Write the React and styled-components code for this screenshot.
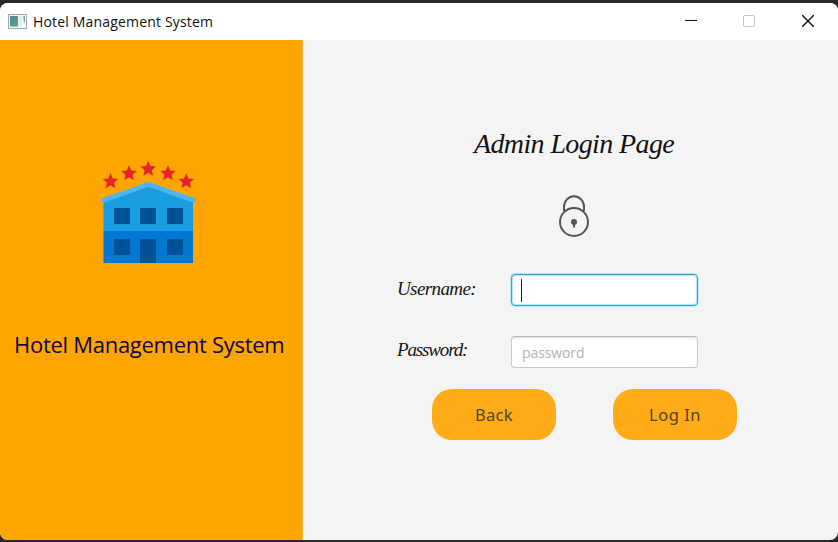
import React from "react";
import styled, { createGlobalStyle } from "styled-components";

const GlobalStyle = createGlobalStyle`
  * { box-sizing: border-box; }
  body { margin: 0; background: #28282a; overflow: hidden; }
`;

const Desktop = styled.div`
  height: 542px;
  padding: 3px 0 2px;
  background: #28282a;
`;

const Window = styled.div`
  display: flex;
  flex-direction: column;
  width: 838px;
  height: 537px;
  border-radius: 8px;
  overflow: hidden;
  background: #f4f4f4;
`;

const TitleBar = styled.header`
  display: flex;
  align-items: center;
  flex: none;
  height: 37px;
  padding-left: 8px;
  background: #fff;
`;

const WindowTitle = styled.span`
  flex: 1;
  margin-left: 6px;
  padding-top: 1px;
  font: 14px/20px "Open Sans", sans-serif;
  letter-spacing: ${(p) => p.$spacing};
  color: #111;
  white-space: nowrap;
`;

const WindowControl = styled.button`
  display: flex;
  align-items: center;
  justify-content: center;
  width: ${(p) => p.$width}px;
  height: 37px;
  padding: ${(p) => p.$lift || 0}px 0 ${(p) => (p.$lift ? 0 : 1)}px;
  border: 0;
  background: transparent;
`;

const Content = styled.div`
  display: flex;
  flex: 1;
`;

const BrandPanel = styled.aside`
  display: flex;
  flex-direction: column;
  width: 303px;
  padding-top: 118px;
  background: #ffa500;
  border-right: 1px solid #f5b240;
`;

const HotelLogo = styled.svg`
  display: block;
  flex: none;
  margin-left: 98px;
`;

const BrandName = styled.h1`
  margin: 60px 0 0 14px;
  font: 400 22px/32px "Open Sans", sans-serif;
  letter-spacing: ${(p) => p.$spacing};
  color: #0b0748;
  white-space: nowrap;
`;

const LoginPanel = styled.main`
  flex: 1;
  padding-top: 84px;
`;

const Heading = styled.h2`
  margin: 0 0 0 171px;
  font: italic 400 28px/40px "Liberation Serif", serif;
  letter-spacing: ${(p) => p.$spacing};
  color: #111;
  white-space: nowrap;
`;

const LockIcon = styled.svg`
  display: block;
  margin: 29px 0 0 255px;
`;

const FieldRow = styled.label`
  display: flex;
  align-items: flex-start;
  height: 32px;
  margin: ${(p) => p.$top}px 0 0 94px;
`;

const FieldName = styled.span`
  width: 114px;
  font: italic 400 19px/${(p) => p.$line}px "Liberation Serif", serif;
  letter-spacing: ${(p) => p.$spacing};
  color: #151515;
`;

const FieldBox = styled.span`
  display: flex;
  align-items: center;
  width: 187px;
  height: 32px;
  padding: 0 ${(p) => (p.$focused ? 9 : 10)}px;
  border: ${(p) => (p.$focused ? "1.5px solid #349fc8" : "1px solid #c8c8c8")};
  border-top-color: ${(p) => (p.$focused ? "#349fc8" : "#b8b8b8")};
  border-radius: 4px;
  background: #fff;
  box-shadow: ${(p) =>
    p.$focused
      ? "0 0 1px 1px #b5e8f8, inset 0 0 1px 1px #aee6f8"
      : "inset 0 2px 2px -1px #ddd"};
`;

const Caret = styled.span`
  width: 1px;
  height: 23px;
  background: #222;
`;

const Placeholder = styled.span`
  padding-top: 2px;
  font: 14px/20px "Open Sans", sans-serif;
  letter-spacing: ${(p) => p.$spacing};
  color: #b4b4b4;
`;

const Actions = styled.div`
  display: flex;
  gap: 57px;
  margin: 21px 0 0 128.5px;
`;

const ActionButton = styled.button`
  width: 124px;
  height: 51px;
  padding: 0 0 0 1px;
  border: 0;
  border-radius: 20px;
  background: #ffac18;
  font: 16.5px/24px "Noto Sans", sans-serif;
  letter-spacing: ${(p) => p.$spacing};
  color: #51441f;
`;

const STARS = [
  [12.5, 23.5],
  [31, 15.5],
  [50.2, 11],
  [70, 15.5],
  [88.3, 23.5],
];

function starPoints(cx, cy, radius) {
  return Array.from({ length: 10 }, (_, i) => {
    const r = i % 2 ? radius * 0.46 : radius;
    const a = -Math.PI / 2 + (i * Math.PI) / 5;
    return `${(cx + r * Math.cos(a)).toFixed(2)},${(cy + r * Math.sin(a)).toFixed(2)}`;
  }).join(" ");
}

function Hotel() {
  return (
    <HotelLogo width="102" height="110" viewBox="0 0 102 110">
      <path d="M5.5 41 50.5 26 95 41V74H5.5Z" fill="#1b9de3" />
      <path d="M5.5 73H95v32H5.5Z" fill="#0078d4" />
      <path d="m5.5 42.3 45-16L95.5 42.3" fill="none" stroke="#50b4ef" strokeWidth="4.8" strokeLinecap="round" strokeLinejoin="round" />
      <g fill="#005296">
        <path d="M16 50h16v16H16zM42 50h16v16H42zM69 50h16v16H69zM16 81h16v16H16zM69 81h16v16H69zM42 81h16v24H42z" />
      </g>
      <g fill="#e5252b">
        {STARS.map(([x, y]) => (
          <polygon key={x} points={starPoints(x, y, 8.2)} />
        ))}
      </g>
    </HotelLogo>
  );
}

function Lock() {
  return (
    <LockIcon width="32" height="44" viewBox="0 0 32 44" fill="none" stroke="#555" strokeWidth="2">
      <path d="M6 18v-4.2a10 10.5 0 0 1 20 0V18" />
      <circle cx="16" cy="29" r="14" />
      <circle cx="16" cy="29" r="3" fill="#555" stroke="none" />
      <path d="M16 30v4.5" />
    </LockIcon>
  );
}

function AppIcon() {
  return (
    <svg width="19" height="16" viewBox="0 0 19 16">
      <defs>
        <linearGradient id="screen" x1="0" y1="0" x2="0.5" y2="1">
          <stop offset="0" stopColor="#577eae" />
          <stop offset="1" stopColor="#55a477" />
        </linearGradient>
      </defs>
      <rect x=".5" y=".5" width="18" height="14" fill="#f5f6f8" stroke="#a2a9b0" />
      <rect x="2" y="2" width="8" height="10.5" fill="url(#screen)" />
      <path d="M11 2h3v10.5h-3z" fill="#e4e7ed" />
      <path d="M15.5 2h1.5v7l-1.5-3z" fill="#65a594" />
    </svg>
  );
}

export default function App() {
  return (
    <Desktop>
      <GlobalStyle />
      <Window>
        <TitleBar>
          <AppIcon />
          <WindowTitle $spacing="0.17px">Hotel Management System</WindowTitle>
          <WindowControl $width={58} aria-label="Minimize">
            <svg width="12" height="12"><path d="M0 5.5h12" stroke="#111" /></svg>
          </WindowControl>
          <WindowControl $width={58} aria-label="Maximize">
            <svg width="12" height="12"><rect x=".5" y=".5" width="11" height="11" rx="1" fill="none" stroke="#c4c4c4" /></svg>
          </WindowControl>
          <WindowControl $width={60} aria-label="Close">
            <svg width="12" height="12"><path d="m0 0 12 12M12 0 0 12" stroke="#111" strokeWidth="1.4" /></svg>
          </WindowControl>
        </TitleBar>
        <Content>
          <BrandPanel>
            <Hotel />
            <BrandName $spacing="-0.28px">Hotel Management System</BrandName>
          </BrandPanel>
          <LoginPanel>
            <Heading $spacing="-0.62px">Admin Login Page</Heading>
            <Lock />
            <FieldRow $top={37}>
              <FieldName $line={30} $spacing="-0.6px">Username:</FieldName>
              <FieldBox $focused><Caret /></FieldBox>
            </FieldRow>
            <FieldRow $top={30}>
              <FieldName $line={28} $spacing="-1.15px">Password:</FieldName>
              <FieldBox><Placeholder $spacing="-0.1px">password</Placeholder></FieldBox>
            </FieldRow>
            <Actions>
              <ActionButton $spacing="0.3px">Back</ActionButton>
              <ActionButton $spacing="0.5px">Log In</ActionButton>
            </Actions>
          </LoginPanel>
        </Content>
      </Window>
    </Desktop>
  );
}
